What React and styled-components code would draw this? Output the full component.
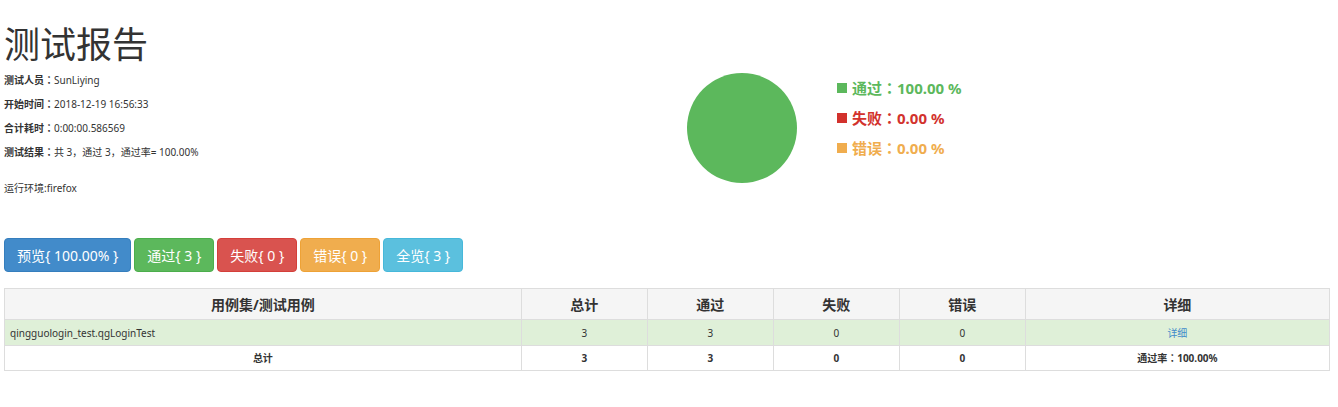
import React from "react";
import styled, { createGlobalStyle } from "styled-components";

const GlobalStyle = createGlobalStyle`
  *, *::before, *::after { box-sizing: border-box; }
  body {
    margin: 0;
    background: #fff;
    color: #333;
    font-family: "Noto Sans", "Noto Sans CJK SC", sans-serif;
    font-size: 10px;
    line-height: 14px;
  }
`;

const Page = styled.main`
  padding: 25px 8px 36px 4px;
`;

const Header = styled.header`
  display: grid;
  grid-template-columns: 1fr 1fr;
  align-items: start;
`;

const Title = styled.h1`
  margin: 0 0 8px;
  font-size: 36px;
  font-weight: 400;
  line-height: 40px;
`;

const Facts = styled.dl`
  display: grid;
  gap: 10px;
  margin: 0;
`;

const Fact = styled.div`
  display: flex;

  dt { font-weight: 700; }
  dd { margin: 0; }
`;

const Environment = styled.p`
  margin: 22px 0 0;
`;

/* The Traditional Chinese form of the full-width colon sits in the middle of its cell. */
const CenteredColon = styled.span`
  font-family: "Noto Sans CJK TC", sans-serif;
  line-height: 1;
`;

const Chart = styled.section`
  display: flex;
  align-items: flex-start;
  gap: 40px;
  padding: 48px 0 0 20px;
`;

const Pie = styled.svg`
  flex: none;
  width: 110px;
  height: 110px;
`;

const Legend = styled.ul`
  list-style: none;
  margin: 0;
  padding: 0;
`;

const LegendItem = styled.li`
  display: flex;
  align-items: center;
  gap: 5px;
  color: ${(p) => p.$color};
  font-size: 15px;
  font-weight: 700;
  line-height: 30px;

  &::before {
    content: "";
    width: 10px;
    height: 10px;
    background: currentColor;
  }
`;

const Filters = styled.div`
  display: flex;
  flex-wrap: wrap;
  gap: 3px;
  margin: 43px 0 16px;
`;

const FilterButton = styled.button`
  height: 34px;
  padding: 1px 12px 0;
  border: 1px solid ${(p) => p.$border};
  border-radius: 4px;
  background: ${(p) => p.$fill};
  color: #fff;
  font-family: inherit;
  font-size: 14px;
  line-height: 20px;
  cursor: pointer;
`;

const ReportTable = styled.table`
  width: 100%;
  table-layout: fixed;
  border-collapse: collapse;
`;

const Col = styled.col`
  width: ${(p) => p.$width};
`;

const HeadCell = styled.th`
  height: 31px;
  padding: 2px 5px 0;
  border: 1px solid #ddd;
  background: #f5f5f5;
  font-size: 14px;
  font-weight: 700;
  line-height: 20px;
`;

const Cell = styled.td`
  height: ${(p) => (p.$total ? "25px" : "26px")};
  padding: 0 5px;
  border: 1px solid #ddd;
  background: ${(p) => (p.$total ? "#fff" : "#dff0d8")};
  font-weight: ${(p) => (p.$total ? 700 : 400)};
  text-align: ${(p) => p.$align || "center"};
`;

const DetailLink = styled.a`
  color: #428bca;
  text-decoration: none;
`;

const Colon = () => <CenteredColon lang="zh-TW">：</CenteredColon>;

const facts = [
  ["测试人员", "SunLiying"],
  ["开始时间", "2018-12-19 16:56:33"],
  ["合计耗时", "0:00:00.586569"],
  ["测试结果", "共 3，通过 3，通过率= 100.00%"],
];

const legend = [
  ["通过", "100.00 %", "#5cb85c"],
  ["失败", "0.00 %", "#d2322d"],
  ["错误", "0.00 %", "#f0ad4e"],
];

const filters = [
  ["预览{ 100.00% }", "#428bca", "#357ebd"],
  ["通过{ 3 }", "#5cb85c", "#4cae4c"],
  ["失败{ 0 }", "#d9534f", "#d43f3a"],
  ["错误{ 0 }", "#f0ad4e", "#eea236"],
  ["全览{ 3 }", "#5bc0de", "#46b8da"],
];

const columns = [
  ["用例集/测试用例", "39%"],
  ["总计", "126px"],
  ["通过", "126px"],
  ["失败", "126px"],
  ["错误", "126px"],
  ["详细", "auto"],
];

const counts = [3, 3, 0, 0];

export default function App() {
  return (
    <>
      <GlobalStyle />
      <Page lang="zh-CN">
        <Header>
          <div>
            <Title>测试报告</Title>
            <Facts>
              {facts.map(([label, value]) => (
                <Fact key={label}>
                  <dt>{label}<Colon /></dt>
                  <dd>{value}</dd>
                </Fact>
              ))}
            </Facts>
            <Environment>运行环境:firefox</Environment>
          </div>
          <Chart>
            <Pie viewBox="0 0 110 110" aria-hidden="true">
              <circle cx="55" cy="55" r="55" fill="#5cb85c" />
            </Pie>
            <Legend>
              {legend.map(([label, value, color]) => (
                <LegendItem key={label} $color={color}>
                  <span>{label}<Colon />{value}</span>
                </LegendItem>
              ))}
            </Legend>
          </Chart>
        </Header>
        <Filters>
          {filters.map(([label, fill, border]) => (
            <FilterButton key={label} type="button" $fill={fill} $border={border}>
              {label}
            </FilterButton>
          ))}
        </Filters>
        <ReportTable>
          <colgroup>
            {columns.map(([label, width]) => <Col key={label} $width={width} />)}
          </colgroup>
          <thead>
            <tr>
              {columns.map(([label]) => <HeadCell key={label} scope="col">{label}</HeadCell>)}
            </tr>
          </thead>
          <tbody>
            <tr>
              <Cell $align="left">qingguologin_test.qgLoginTest</Cell>
              {counts.map((n, i) => <Cell key={i}>{n}</Cell>)}
              <Cell><DetailLink href="#detail">详细</DetailLink></Cell>
            </tr>
          </tbody>
          <tfoot>
            <tr>
              <Cell $total>总计</Cell>
              {counts.map((n, i) => <Cell key={i} $total>{n}</Cell>)}
              <Cell $total>通过率<Colon />100.00%</Cell>
            </tr>
          </tfoot>
        </ReportTable>
      </Page>
    </>
  );
}
